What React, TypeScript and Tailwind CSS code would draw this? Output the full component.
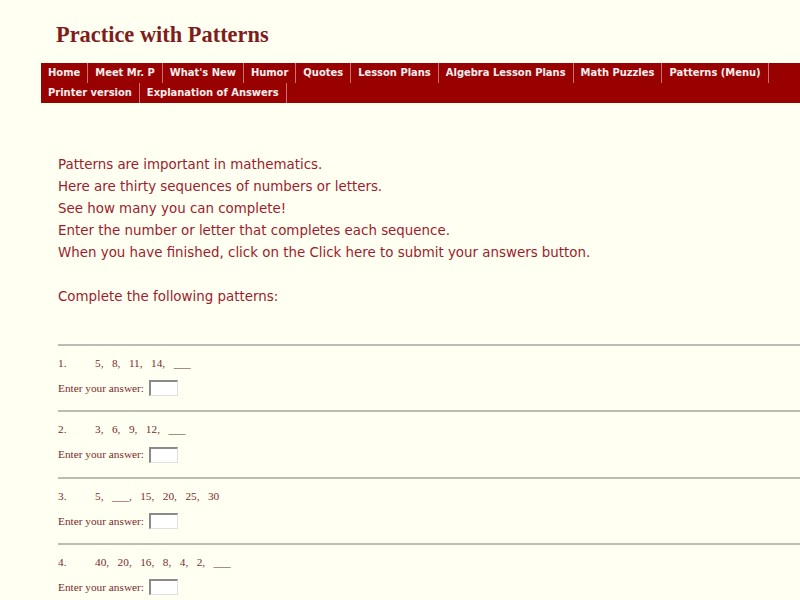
import React from 'react';

const navItems = [
  'Home',
  'Meet Mr. P',
  "What's New",
  'Humor',
  'Quotes',
  'Lesson Plans',
  'Algebra Lesson Plans',
  'Math Puzzles',
  'Patterns (Menu)',
  'Printer version',
  'Explanation of Answers',
];

const intro = [
  'Patterns are important in mathematics.',
  'Here are thirty sequences of numbers or letters.',
  'See how many you can complete!',
  'Enter the number or letter that completes each sequence.',
  'When you have finished, click on the Click here to submit your answers button.',
];

const questions = [
  { n: '1.', seq: '5,   8,   11,   14,   ___' },
  { n: '2.', seq: '3,   6,   9,   12,   ___' },
  { n: '3.', seq: '5,   ___,   15,   20,   25,   30' },
  { n: '4.', seq: '40,   20,   16,   8,   4,   2,   ___' },
];

export default function App() {
  return (
    <div className="h-[600px] w-[800px] overflow-hidden bg-[#fffff2]">
      <div className="ml-[41px] w-[820px] pt-[22px]">
        <h1 className="pl-[15px] font-['Liberation_Serif',serif] text-[22.4px] leading-[26px] font-bold text-[#801c1c]">
          Practice with Patterns
        </h1>

        <nav className="mt-[15px] flex flex-wrap bg-[#990000]">
          {navItems.map((item) => (
            <span
              key={item}
              className="h-5 border-r border-[#c77373] px-[7px] font-['DejaVu_Sans',sans-serif] text-[9.95px] leading-5 font-bold whitespace-nowrap text-[#fbeeee]"
            >
              {item}
            </span>
          ))}
        </nav>

        <div className="mt-[51px] pl-[17px] font-['Comic_Sans_MS','DejaVu_Sans',sans-serif] text-[13.4px] leading-[22px] text-[#9e1b2b]">
          {intro.map((line) => (
            <p key={line}>{line}</p>
          ))}
          <p className="mt-[22px]">Complete the following patterns:</p>
        </div>

        <div className="mt-[36px] ml-[17px] font-['Liberation_Serif',serif] text-[11.3px] text-[#7c2a2a]">
          {questions.map((q) => (
            <div key={q.n} className="h-[66.3px] border-t-2 border-t-[#bdbcb2]">
              <div className="flex pt-[10px] leading-[14px]">
                <span className="w-[37px]">{q.n}</span>
                <span className="whitespace-pre">{q.seq}</span>
              </div>
              <div className="mt-[10px] flex items-center gap-[5px]">
                <span>Enter your answer:</span>
                <span className="h-4 w-[29px] border-t-2 border-l-2 border-t-[#8a8a8a] border-l-[#8a8a8a] border-r border-b border-r-[#e0e0e0] border-b-[#e0e0e0] bg-white" />
              </div>
            </div>
          ))}
        </div>
      </div>
    </div>
  );
}
